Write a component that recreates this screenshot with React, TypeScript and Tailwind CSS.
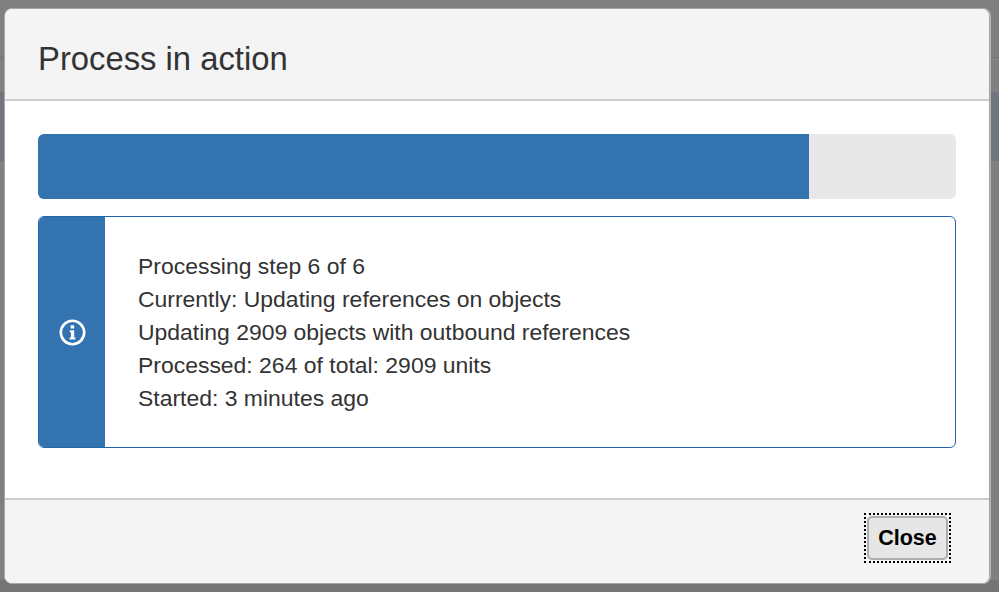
import React from "react";

export default function App() {
  return (
    <div className="relative h-[592px] w-[999px] overflow-hidden bg-[#808080] pl-[4px] pr-[9px] pt-[8px] pb-[8px] font-['Liberation_Sans',Arial,sans-serif] text-[#333333]">
      <div className="absolute left-0 top-[57px] h-[1px] w-full bg-[#707070]" />
      <div className="absolute left-0 top-[92px] h-[69px] w-full bg-[#70757f]" />
      <div className="absolute bottom-0 left-0 h-[12px] w-full bg-[#747474]" />
      <div className="relative flex h-[576px] flex-col overflow-hidden rounded-[8px] border border-[#a6a6a6] bg-white shadow-[1px_0_0_#b4b4b4]">
        <div className="flex h-[92px] items-center border-b-2 border-[#cccccc] bg-[#f4f4f4] px-[33px] pt-[10px]">
          <h1 className="text-[32.8px] font-normal leading-none">Process in action</h1>
        </div>
        <div className="flex flex-1 flex-col px-[33px] pt-[33px]">
          <div className="h-[65px] overflow-hidden rounded-[6px] bg-[#e8e8e8]">
            <div className="h-full w-[771px] bg-[#3273b0]" />
          </div>
          <div className="mt-[17px] flex h-[232px] overflow-hidden rounded-[6px] border border-[#2167ae] bg-white">
            <div className="flex w-[66px] shrink-0 items-center justify-center bg-[#3273b0]">
              <svg width="27" height="27" viewBox="0 0 27 27" fill="none">
                <circle cx="13.5" cy="13.5" r="11.7" stroke="#ffffff" strokeWidth="2.6" />
                <rect x="11.6" y="6.2" width="3.6" height="3.2" rx="0.5" fill="#ffffff" />
                <path d="M10.8 11.2h4.4v7.4h1.2v2h-5.8v-2h1.3v-5.4h-1.1z" fill="#ffffff" />
              </svg>
            </div>
            <div className="flex flex-1 flex-col justify-center pl-[33px] pt-[1px] text-[22.95px] leading-[33px]">
              <div>Processing step 6 of 6</div>
              <div>Currently: Updating references on objects</div>
              <div>Updating 2909 objects with outbound references</div>
              <div>Processed: 264 of total: 2909 units</div>
              <div>Started: 3 minutes ago</div>
            </div>
          </div>
        </div>
        <div className="flex h-[85px] items-center justify-end border-t-2 border-[#cccccc] bg-[#f4f4f4] pb-[7px] pr-[38px]">
          <div className="border-2 border-dotted border-black p-[1px]">
            <button className="flex h-[44px] w-[81px] items-center justify-center rounded-[5px] border-2 border-[#adadad] bg-[#e6e6e6] text-[21.5px] font-bold text-black">
              Close
            </button>
          </div>
        </div>
      </div>
    </div>
  );
}
